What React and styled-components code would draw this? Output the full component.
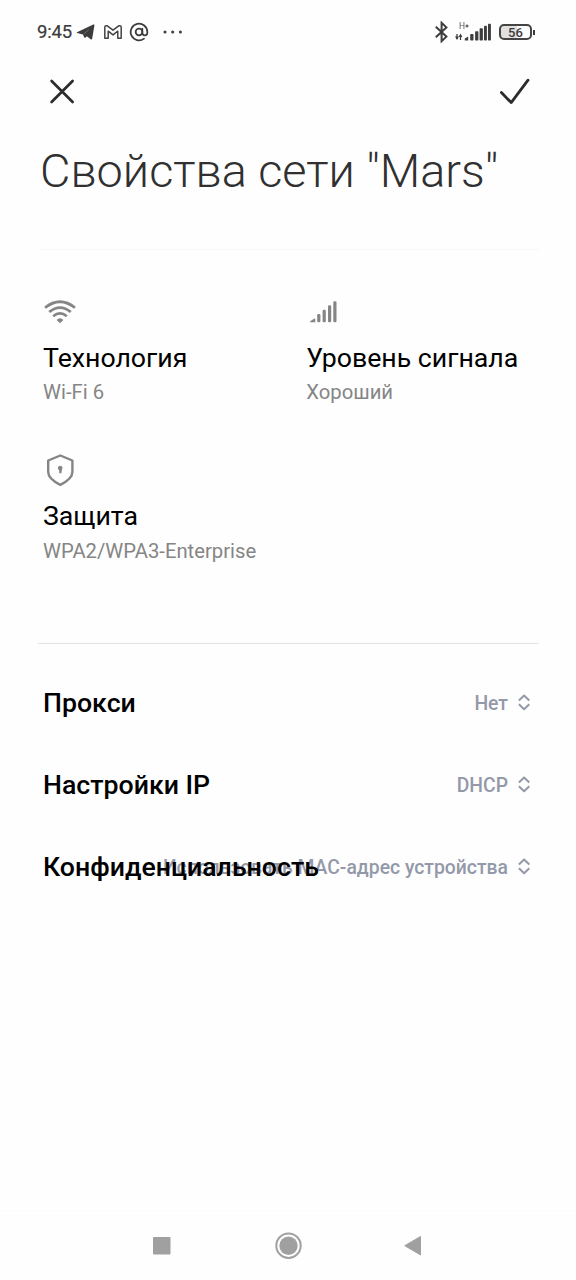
import React from "react";
import styled, { createGlobalStyle } from "styled-components";
import { AtSign } from "lucide-react";

const GlobalStyle = createGlobalStyle`
  * { box-sizing: border-box; }
  body { margin: 0; background: #fefefe; font-family: Roboto, "Noto Sans", sans-serif; }
  svg { display: block; flex: none; }
`;

const Screen = styled.div`
  width: 576px;
  height: 1280px;
  display: flex;
  flex-direction: column;
  background: #fefefe;
  overflow: hidden;
`;

const StatusBar = styled.header`
  height: 62px;
  padding: 2px 41px 0 37px;
  display: flex;
  align-items: center;
  justify-content: space-between;
  color: #3c3c3c;
`;

const StatusGroup = styled.div`
  display: flex;
  align-items: center;
  height: 32px;
`;

const Clock = styled.span`
  width: 39px;
  font-size: 18.5px;
  line-height: 32px;
  letter-spacing: -0.15px;
  white-space: nowrap;
  -webkit-text-stroke: 0.2px currentColor;
`;

const Battery = styled.div`
  display: flex;
  align-items: center;
  margin-left: 7px;
`;

const BatteryCell = styled.div`
  width: 33px;
  height: 16px;
  border: 2px solid #444;
  border-radius: 5px;
  background: linear-gradient(90deg, #e0e0e0 56%, #fefefe 56%);
  font-size: 13px;
  font-weight: 500;
  line-height: 13px;
  text-align: center;
`;

const BatteryTip = styled.div`
  width: 2px;
  height: 5px;
  margin-left: 1px;
  background: #3c3c3c;
`;

const ActionBar = styled.nav`
  height: 60px;
  padding: 0 45px 0 48px;
  display: flex;
  align-items: center;
  justify-content: space-between;
`;

const IconButton = styled.button`
  padding: 0;
  border: 0;
  background: none;
`;

const Title = styled.h1`
  margin: 21px 0 0 40px;
  height: 106px;
  font-size: 46.8px;
  font-weight: 300;
  line-height: 56px;
  color: #303030;
  white-space: nowrap;
`;

const Divider = styled.hr`
  flex: none;
  width: 501px;
  height: 1px;
  margin: 0 0 0 38px;
  border: 0;
  background: ${(p) => p.$color};
`;

const Properties = styled.section`
  height: 393px;
  padding: 45px 0 0 43px;
  display: grid;
  grid-template-columns: 263.3px 1fr;
  grid-auto-rows: 158.3px;
`;

const Property = styled.div`
  display: flex;
  flex-direction: column;
`;

const PropertyIcon = styled.div`
  height: 34px;
  margin-bottom: 13px;
  display: flex;
  align-items: center;
`;

const PropertyName = styled.div`
  font-size: 26.7px;
  line-height: 32px;
  color: #000;
  white-space: nowrap;
`;

const PropertyValue = styled.div`
  margin-top: 6.3px;
  font-size: 20.25px;
  line-height: 24px;
  color: #858585;
  white-space: nowrap;
`;

const Settings = styled.section`
  flex: 1;
  padding: 18px 45px 0 43px;
`;

const SettingRow = styled.div`
  height: 82px;
  display: grid;
  align-items: center;
`;

const SettingValue = styled.div`
  grid-area: 1 / 1;
  justify-self: end;
  display: flex;
  align-items: center;
  gap: 9px;
  color: #9499a9;
`;

const SettingText = styled.span`
  padding-top: 2px;
  font-size: 19.35px;
  font-weight: 500;
  line-height: 24px;
  white-space: nowrap;
`;

const SettingName = styled.div`
  grid-area: 1 / 1;
  justify-self: start;
  font-size: 26.7px;
  font-weight: 500;
  line-height: 32px;
  color: #000;
  white-space: nowrap;
`;

const NavBar = styled.footer`
  height: 70px;
  padding: 0 153px 0 152px;
  display: flex;
  align-items: center;
  justify-content: space-between;
  border-top: 1px solid #fbfbfb;
`;

const TelegramIcon = () => (
  <svg width="20" height="18" viewBox="0 0 20 18">
    <path d="M1 9.2 17.3 1.6Q18.6 1.1 18.4 2.5L16.2 15.6Q15.9 17 14.7 16.2L10.8 13.3 9.4 14.7Q8.4 15 8 14L7 11.4 1.1 10.1Q.4 9.6 1 9.2Z" fill="#3c3c3c" />
    <path d="M7.6 11.2 12.8 6.6" fill="none" stroke="#999" strokeWidth=".5" />
  </svg>
);

const MailIcon = () => (
  <svg width="18" height="14" viewBox="0 0 18 14" fill="none" stroke="#444" strokeWidth="1.5" strokeLinejoin="round">
    <path d="M.8 2.2Q.8.8 2.2.8H3.3L9 5.2 14.7.8H15.8Q17.2.8 17.2 2.2V13.2H13.8V6.2L9 9.9 4.2 6.2V13.2H.8Z" />
  </svg>
);

const DotsIcon = () => (
  <svg width="20" height="4" viewBox="0 0 20 4" fill="#3c3c3c">
    <circle cx="2" cy="2" r="1.5" />
    <circle cx="9.7" cy="2" r="1.5" />
    <circle cx="17.4" cy="2" r="1.5" />
  </svg>
);

const BluetoothIcon = () => (
  <svg width="14" height="22" viewBox="0 0 14 22" fill="none" stroke="#3c3c3c" strokeWidth="2">
    <path d="M1.8 5.8 12.4 15.6 7.6 20.2V1.8L12.4 6.4 1.8 16.2" />
  </svg>
);

const MobileSvg = styled.svg`
  opacity: 0.99;
  will-change: opacity;
`;

const MobileIcon = () => (
  <MobileSvg width="37" height="20" viewBox="0 0 37 20" fill="#3c3c3c">
    <text x="4" y="7" fontSize="8.5" fontFamily="Roboto, sans-serif" fill="#555">H</text>
    <path d="M10.4 4H13.6M12 2.4V5.6" stroke="#3c3c3c" strokeWidth="1.1" />
    <path d="M2 12V17M5.5 18V13" stroke="#3c3c3c" strokeWidth="1.3" />
    <path d="M0 14.6H4L2 18ZM3.6 15H7.4L5.5 11.6Z" />
    <path d="M9.8 18.5V16.6L13.2 14.4V18.5Z" />
    <rect x="15.2" y="12" width="3.3" height="6.5" rx=".7" />
    <rect x="20.1" y="9.2" width="3.3" height="9.3" rx=".7" />
    <rect x="24.6" y="6.2" width="3.3" height="12.3" rx=".7" />
    <rect x="29" y="3.8" width="2.9" height="14.7" rx=".7" />
    <rect x="33" y="1.8" width="2.9" height="16.7" rx=".7" />
  </MobileSvg>
);

const CloseIcon = () => (
  <svg width="28" height="28" viewBox="0 0 28 28" fill="none" stroke="#2c2c2c" strokeWidth="2.7" strokeLinecap="round">
    <path d="M3.6 3 24.6 24M24.6 3 3.6 24" />
  </svg>
);

const CheckIcon = () => (
  <svg width="34" height="28" viewBox="0 0 34 28" fill="none" stroke="#2c2c2c" strokeWidth="2.8" strokeLinecap="round" strokeLinejoin="round">
    <path d="M4.4 14.6 14.2 24.6 31 2.2" />
  </svg>
);

const WifiIcon = () => (
  <svg width="34" height="26" viewBox="0 -.3 34 26" fill="none" stroke="#858585" strokeWidth="2.7">
    <path d="M2 8.5Q17-3.6 32 8.5" />
    <path d="M6.2 12.7Q17 3.9 27.8 12.7" />
    <path d="M10.2 16.9Q17 11.3 23.8 16.9" />
    <path d="M13.6 20.7Q17 17.4 20.4 20.7L17 24Z" fill="#858585" stroke="none" />
  </svg>
);

const SignalIcon = () => (
  <svg width="34" height="26" viewBox="-.7 0 34 26" fill="#858585">
    <path d="M3.2 23.2Q3.2 22.4 4.2 21.8L7.4 19.7Q8.6 19.1 8.6 20.3V23.3H3.7Z" />
    <rect x="10.5" y="15" width="3.2" height="8.3" rx="1.2" />
    <rect x="15.9" y="10.8" width="3.2" height="12.5" rx="1.2" />
    <rect x="21.3" y="6.2" width="3.2" height="17.1" rx="1.2" />
    <rect x="26.6" y="2.2" width="3.2" height="21.1" rx="1.2" />
  </svg>
);

const ShieldIcon = () => (
  <svg width="34" height="34" viewBox="0 -.3 34 34" fill="none" stroke="#858585" strokeWidth="2.4" strokeLinejoin="round">
    <path d="M17.3 2.2 29.4 7.2V18.8Q29.4 25.6 17.3 31.6 5.2 25.6 5.2 18.8V7.2Z" />
    <path d="M16.2 19.9V16.8Q14.9 16.4 14.9 14.9A2.3 2.3 0 1 1 18.9 16.4L18.4 19.9Z" fill="#858585" stroke="none" />
  </svg>
);

const SelectIcon = () => (
  <svg width="14" height="18" viewBox="0 0 14 18" fill="none" stroke="#9499a9" strokeWidth="2" strokeLinejoin="round">
    <path d="M1.9 6.5 7.1 1.6 12.3 6.5M1.9 10.3 7.1 15.2 12.3 10.3" />
  </svg>
);

const properties = [
  { icon: <WifiIcon />, name: "Технология", value: "Wi-Fi 6" },
  { icon: <SignalIcon />, name: "Уровень сигнала", value: "Хороший" },
  { icon: <ShieldIcon />, name: "Защита", value: "WPA2/WPA3-Enterprise" },
];

const settings = [
  { name: "Прокси", value: "Нет" },
  { name: "Настройки IP", value: "DHCP" },
  { name: "Конфиденциальность", value: "Использовать MAC-адрес устройства" },
];

const AppIcons = styled(StatusGroup)`
  gap: 7.5px;
`;

const Spacer = styled.span`
  width: ${(p) => p.$w}px;
`;

export default function App() {
  return (
    <Screen>
      <GlobalStyle />
      <StatusBar>
        <StatusGroup>
          <Clock>9:45</Clock>
          <AppIcons>
            <TelegramIcon />
            <MailIcon />
            <AtSign size={20} strokeWidth={2.1} color="#3c3c3c" />
            <Spacer $w={6.5} />
          </AppIcons>
          <DotsIcon />
        </StatusGroup>
        <StatusGroup>
          <BluetoothIcon />
          <Spacer $w={7} />
          <MobileIcon />
          <Battery>
            <BatteryCell>56</BatteryCell>
            <BatteryTip />
          </Battery>
        </StatusGroup>
      </StatusBar>
      <ActionBar>
        <IconButton aria-label="Закрыть"><CloseIcon /></IconButton>
        <IconButton aria-label="Готово"><CheckIcon /></IconButton>
      </ActionBar>
      <Title>Свойства сети "Mars"</Title>
      <Divider $color="#f8f8f8" />
      <Properties>
        {properties.map((p) => (
          <Property key={p.name}>
            <PropertyIcon>{p.icon}</PropertyIcon>
            <PropertyName>{p.name}</PropertyName>
            <PropertyValue>{p.value}</PropertyValue>
          </Property>
        ))}
      </Properties>
      <Divider $color="#e3e3e3" />
      <Settings>
        {settings.map((s) => (
          <SettingRow key={s.name}>
            <SettingValue>
              <SettingText>{s.value}</SettingText>
              <SelectIcon />
            </SettingValue>
            <SettingName>{s.name}</SettingName>
          </SettingRow>
        ))}
      </Settings>
      <NavBar>
        <svg width="20" height="20" viewBox="0 0 20 20">
          <rect x="1" y="1" width="17.5" height="17.5" rx="1" fill="#a0a0a0" />
        </svg>
        <svg width="28" height="28" viewBox="-.5 0.3 28 28">
          <circle cx="14" cy="14" r="12.2" fill="none" stroke="#a0a0a0" strokeWidth="2" />
          <circle cx="14" cy="14" r="9.2" fill="#a0a0a0" />
        </svg>
        <svg width="20" height="20" viewBox="0 0.3 20 20">
          <path d="M1.8 10 17.5 .8V19.2Z" fill="#a0a0a0" stroke="#a0a0a0" strokeWidth="1" strokeLinejoin="round" />
        </svg>
      </NavBar>
    </Screen>
  );
}
